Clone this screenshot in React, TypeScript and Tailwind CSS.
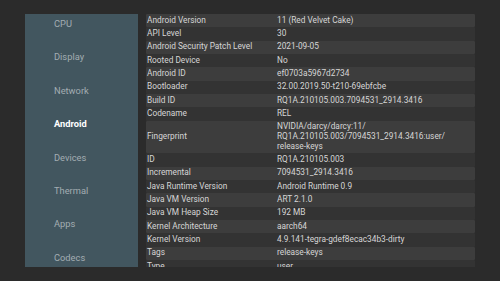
const tabs = ["CPU", "Display", "Network", "Android", "Devices", "Thermal", "Apps", "Codecs"];

const rows: [string, string[]][] = [
  ["Android Version", ["11 (Red Velvet Cake)"]],
  ["API Level", ["30"]],
  ["Android Security Patch Level", ["2021-09-05"]],
  ["Rooted Device", ["No"]],
  ["Android ID", ["ef0703a5967d2734"]],
  ["Bootloader", ["32.00.2019.50-t210-69ebfcbe"]],
  ["Build ID", ["RQ1A.210105.003.7094531_2914.3416"]],
  ["Codename", ["REL"]],
  ["Fingerprint", ["NVIDIA/darcy/darcy:11/", "RQ1A.210105.003/7094531_2914.3416:user/", "release-keys"]],
  ["ID", ["RQ1A.210105.003"]],
  ["Incremental", ["7094531_2914.3416"]],
  ["Java Runtime Version", ["Android Runtime 0.9"]],
  ["Java VM Version", ["ART 2.1.0"]],
  ["Java VM Heap Size", ["192 MB"]],
  ["Kernel Architecture", ["aarch64"]],
  ["Kernel Version", ["4.9.141-tegra-gdef8ecac34b3-dirty"]],
  ["Tags", ["release-keys"]],
  ["Type", ["user"]],
];

export default function App() {
  return (
    <div
      className="w-[500px] h-[281px] bg-[#2b2b2b] flex gap-[8px] px-[25px] py-[14px] overflow-hidden"
      style={{ fontFamily: "Roboto, 'Liberation Sans', sans-serif" }}
    >
      {/* Side menu */}
      <div className="w-[113px] h-[253px] bg-[#42565f] flex flex-col gap-[19.4px] pt-[3px] overflow-hidden">
        {tabs.map((t) => (
          <div
            key={t}
            className={`h-[14px] shrink-0 flex items-center pl-[29px] text-[9.3px] ${
              t === "Android" ? "text-white font-bold" : "text-[#a3adb2]"
            }`}
          >
            {t}
          </div>
        ))}
      </div>

      {/* Info table */}
      <div className="w-[329px] h-[253px] overflow-hidden">
        {rows.map(([label, value], i) => (
          <div
            key={label}
            className={`flex items-center text-[8.3px] leading-[9.67px] py-[1.83px] text-[#d6d6d6] rounded-[1px] ${
              i % 2 === 0 ? "bg-[#3d3d3d]" : "bg-[#333333]"
            }`}
          >
            <div className="w-[131px] pl-[1px] shrink-0">{label}</div>
            <div className="flex flex-col">
              {value.map((v) => (
                <span key={v}>{v}</span>
              ))}
            </div>
          </div>
        ))}
      </div>
    </div>
  );
}
